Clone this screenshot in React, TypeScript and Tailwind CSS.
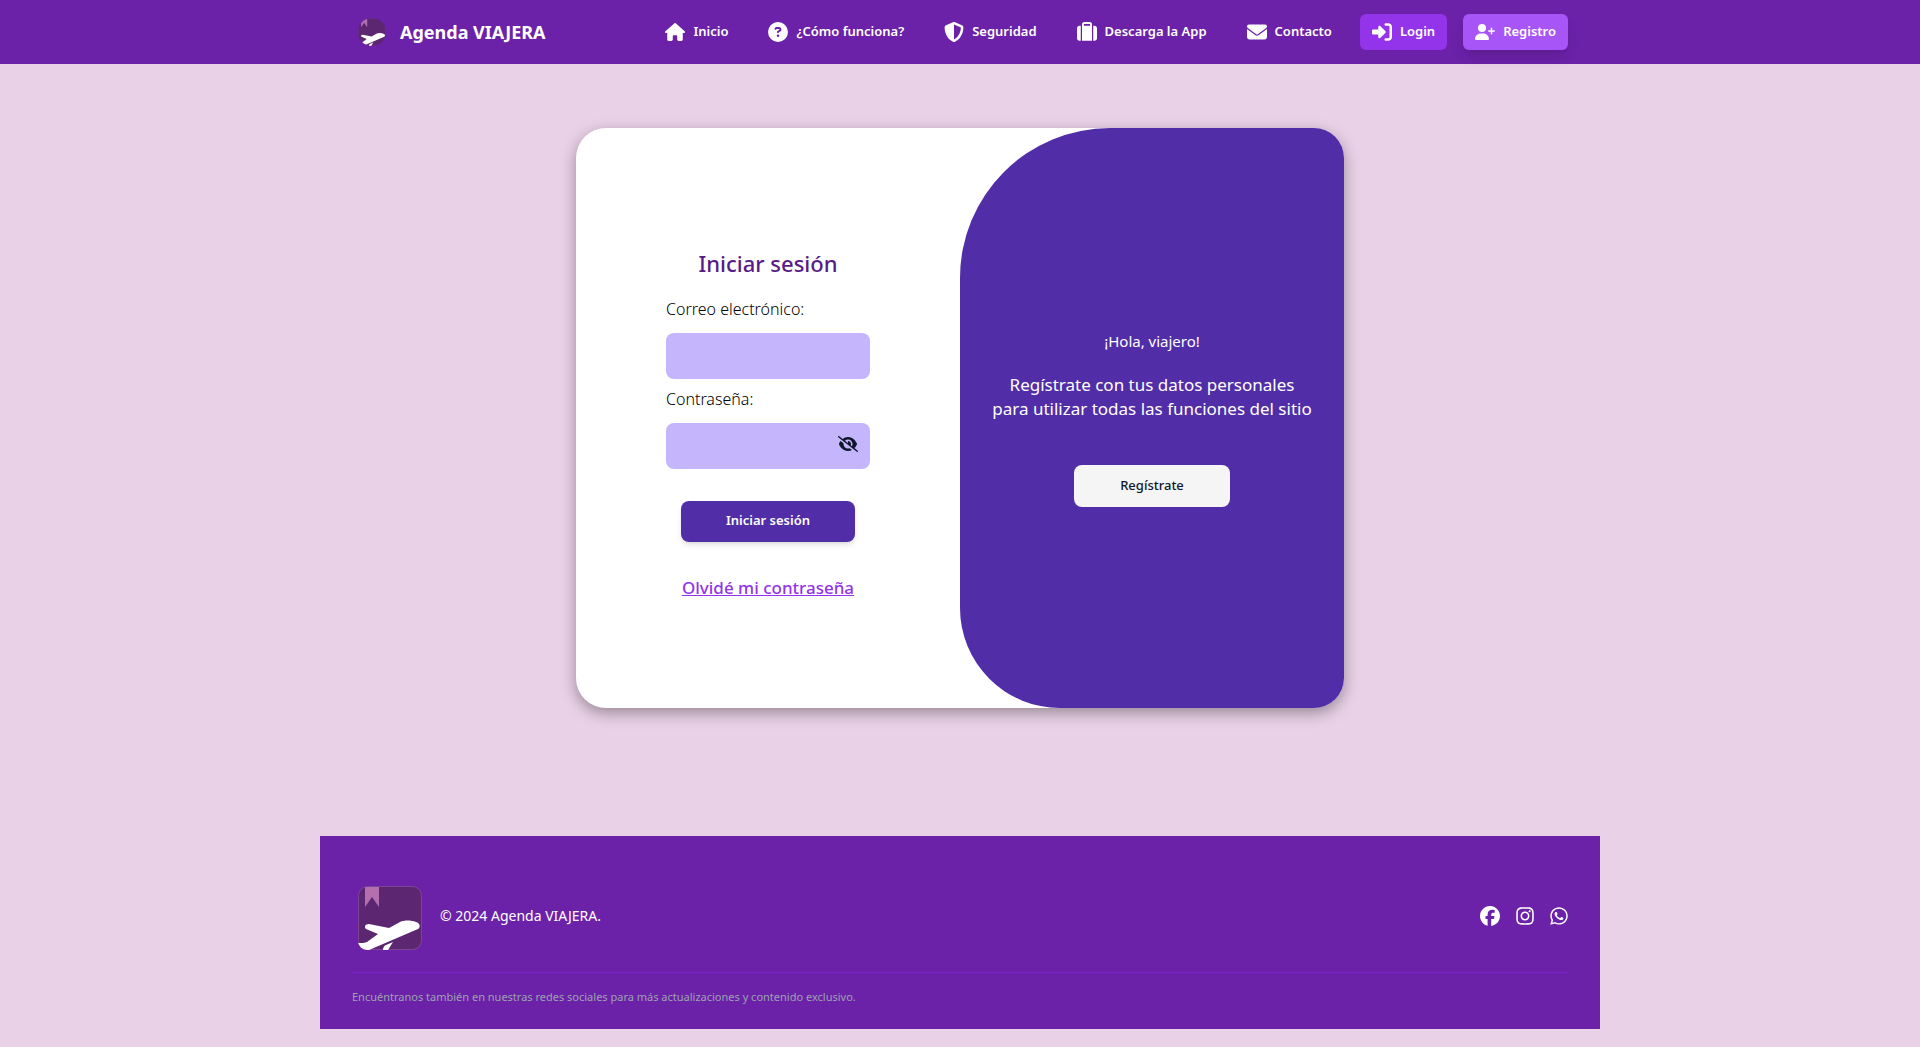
import { useState } from "react";
import type { ReactNode } from "react";
import {
  FaCircleQuestion,
  FaEnvelope,
  FaEye,
  FaEyeSlash,
  FaFacebook,
  FaHouse,
  FaInstagram,
  FaRightToBracket,
  FaShieldHalved,
  FaSuitcase,
  FaUserPlus,
  FaWhatsapp,
} from "react-icons/fa6";

const links = [
  { label: "Inicio", icon: FaHouse },
  { label: "¿Cómo funciona?", icon: FaCircleQuestion },
  { label: "Seguridad", icon: FaShieldHalved },
  { label: "Descarga la App", icon: FaSuitcase },
  { label: "Contacto", icon: FaEnvelope },
];

const socials = [
  { label: "Facebook", icon: FaFacebook, size: "h-5 w-5" },
  { label: "Instagram", icon: FaInstagram, size: "h-5 w-[18px]" },
  { label: "WhatsApp", icon: FaWhatsapp, size: "h-5 w-[18px]" },
];

function Logo({ className, viewBox = "0 0 64 64" }: { className: string; viewBox?: string }) {
  return (
    <svg viewBox={viewBox} className={className} role="img" aria-label="Agenda VIAJERA">
      <clipPath id="logo-clip">
        <rect width="64" height="64" rx="9" />
      </clipPath>
      <rect x="0.5" y="0.5" width="63" height="63" rx="9" fill="#5c2770" stroke="#7d4596" />
      <g clipPath="url(#logo-clip)">
        <path d="M7 1H21V21L14 11L7 21Z" fill="#b36fae" />
        <path
          d="M0 57C4 57 7 57 9 56L20 48L8 43C6 41 7 38 11 38L31 42L42 36C46 34 53 34 58 36C62 37 63 41 60 43L11 64H0Z"
          fill="#fff"
        />
        <path d="M35 56L28 59C25 60 25 64 25 64H30L35 56Z" fill="#fff" />
      </g>
    </svg>
  );
}

function NavButton({ className, children }: { className: string; children: ReactNode }) {
  return (
    <button type="button" className={`flex h-9 items-center gap-2 rounded-md px-3 text-[13px] font-semibold text-white ${className}`}>
      {children}
    </button>
  );
}

function Header() {
  return (
    <header className="bg-[#6b21a8]">
      <div className="mx-auto flex h-16 max-w-[1280px] items-center justify-between px-8">
        <a href="#" className="flex items-center gap-3.5 px-1.5 text-white">
          <Logo className="size-7 rounded-full" />
          <span className="text-lg font-bold">Agenda VIAJERA</span>
        </a>
        <div className="flex items-center">
          <nav className="flex items-center gap-10 pr-7">
            {links.map(({ label, icon: Icon }) => (
              <a key={label} href="#" className="flex items-center gap-2 text-[13px] font-semibold text-white">
                <Icon className="size-5" />
                {label}
              </a>
            ))}
          </nav>
          <div className="flex items-center gap-4">
            <NavButton className="bg-[#9333ea]">
              <FaRightToBracket className="size-5" />
              Login
            </NavButton>
            <NavButton className="bg-[#a855f7] shadow-lg">
              <FaUserPlus className="size-5" />
              Registro
            </NavButton>
          </div>
        </div>
      </div>
    </header>
  );
}

function LoginForm() {
  const [showPassword, setShowPassword] = useState(false);

  return (
    <form onSubmit={(e) => e.preventDefault()} className="flex w-1/2 flex-col items-center justify-center pt-3">
      <h1 className="text-[22px] leading-8 font-medium text-[#581c87]">Iniciar sesión</h1>
      <div className="mt-4.5 flex w-51 flex-col">
        <label htmlFor="email" className="font-light text-black">Correo electrónico:</label>
        <input id="email" type="email" className="mt-3 h-[46px] rounded-lg bg-[#c4b5fd] px-4 text-[13px] outline-none" />
        <label htmlFor="password" className="mt-2 font-light text-black">Contraseña:</label>
        <div className="relative mt-3">
          <input
            id="password"
            type={showPassword ? "text" : "password"}
            className="h-[46px] w-full rounded-lg bg-[#c4b5fd] pr-10 pl-4 text-[13px] outline-none"
          />
          <button
            type="button"
            aria-label="Mostrar contraseña"
            onClick={() => setShowPassword(!showPassword)}
            className="absolute top-[11px] right-3 text-slate-900"
          >
            {showPassword ? <FaEye className="size-5" /> : <FaEyeSlash className="size-5" />}
          </button>
        </div>
      </div>
      <button type="submit" className="mt-8 h-[41px] w-[174px] rounded-lg bg-[#512da8] text-[13px] font-semibold text-white shadow-md">
        Iniciar sesión
      </button>
      <a href="#" className="mt-8 text-[17px] leading-7 font-medium text-[#9333ea] underline">Olvidé mi contraseña</a>
    </form>
  );
}

function WelcomePanel() {
  return (
    <section className="flex w-1/2 flex-col items-center justify-center rounded-tl-[150px] rounded-bl-[100px] bg-[#512da8] text-center text-white">
      <p className="text-[15px] leading-6">¡Hola, viajero!</p>
      <p className="mt-5 text-[17px] leading-6">
        Regístrate con tus datos personales
        <br />
        para utilizar todas las funciones del sitio
      </p>
      <button type="button" className="mt-11 h-[42px] w-39 rounded-lg bg-[#f5f5f5] text-[13px] font-medium text-slate-900">
        Regístrate
      </button>
    </section>
  );
}

function Footer() {
  return (
    <footer className="mx-auto w-full max-w-[1280px] bg-[#6b21a8] px-8 pt-11">
      <div className="flex items-center justify-between pb-5">
        <div className="flex items-center gap-4 text-sm text-white">
          <Logo className="size-18" viewBox="-6 -6 72 72" />
          <span>© 2024 Agenda VIAJERA.</span>
        </div>
        <div className="flex items-center gap-4">
          {socials.map(({ label, icon: Icon, size }) => (
            <a key={label} href="#" aria-label={label} className="text-white">
              <Icon className={size} />
            </a>
          ))}
        </div>
      </div>
      <p className="border-t border-[#7e22ce] pt-4 pb-6 text-[11px] leading-4 text-[#9ca3af]">
        Encuéntranos también en nuestras redes sociales para más actualizaciones y contenido exclusivo.
      </p>
    </footer>
  );
}

export default function App() {
  return (
    <div className="min-h-screen bg-[#e9d1e7] pb-4 font-['Noto_Sans','Open_Sans',sans-serif]">
      <Header />
      <main className="px-4 pt-16 pb-32">
        <div className="mx-auto flex min-h-[580px] max-w-3xl overflow-hidden rounded-[30px] bg-white shadow-[0_5px_15px_rgba(0,0,0,0.35)]">
          <LoginForm />
          <WelcomePanel />
        </div>
      </main>
      <Footer />
    </div>
  );
}
